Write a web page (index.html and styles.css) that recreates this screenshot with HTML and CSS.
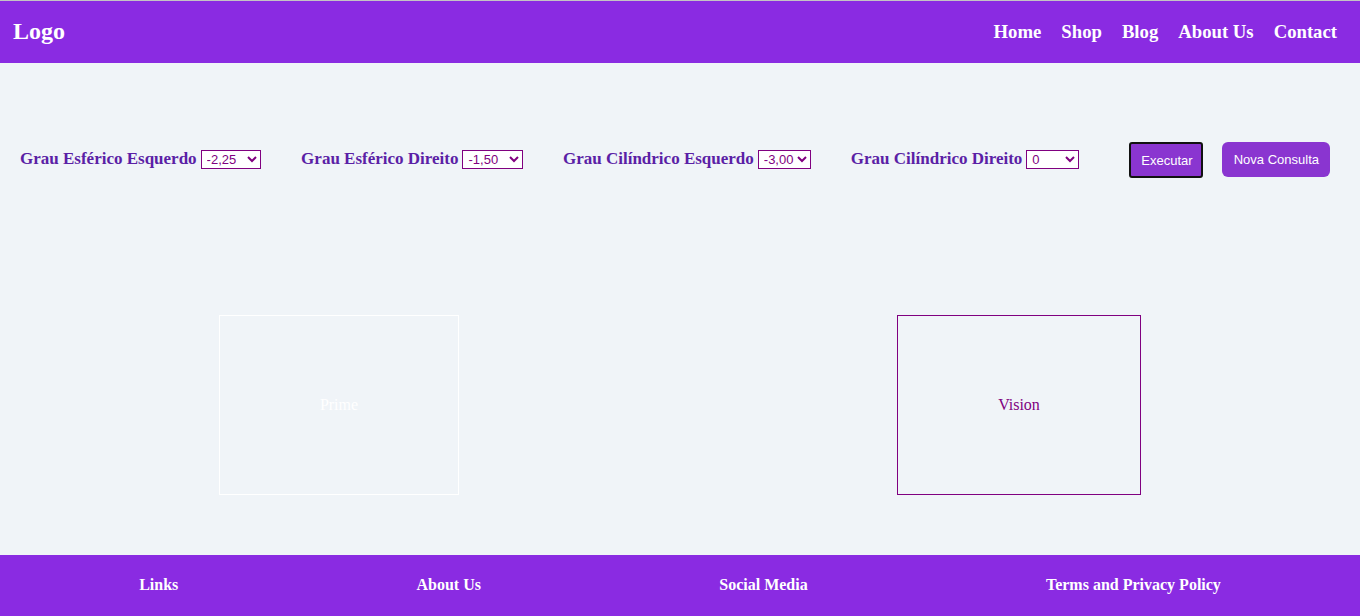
FILE: index.html
```html
<!DOCTYPE html>
<html lang="pt">
<head>
<meta charset="utf-8">
<title>Lentes</title>
<link rel="stylesheet" href="styles.css">
</head>
<body>
<header class="header">
  <div class="logo">Logo</div>
  <nav class="nav">
    <a href="#">Home</a>
    <a href="#">Shop</a>
    <a href="#">Blog</a>
    <a href="#">About Us</a>
    <a href="#">Contact</a>
  </nav>
</header>
<main class="main">
  <div class="controls">
    <label class="field">Grau Esférico Esquerdo
      <select class="sel w60"><option>-2,25</option><option>-10,00</option></select>
    </label>
    <label class="field">Grau Esférico Direito
      <select class="sel w60"><option>-1,50</option><option>-10,00</option></select>
    </label>
    <label class="field">Grau Cilíndrico Esquerdo
      <select class="sel w53"><option>-3,00</option></select>
    </label>
    <label class="field">Grau Cilíndrico Direito
      <select class="sel w53"><option>0</option></select>
    </label>
    <button class="btn btn-exec">Executar</button>
    <button class="btn btn-nova">Nova Consulta</button>
  </div>
  <div class="results">
    <div class="half"><div class="box box-prime">Prime</div></div>
    <div class="half"><div class="box box-vision">Vision</div></div>
  </div>
</main>
<footer class="footer">
  <span>Links</span>
  <span>About Us</span>
  <span>Social Media</span>
  <span>Terms and Privacy Policy</span>
</footer>
</body>
</html>
```

FILE: styles.css
```css
* { box-sizing: border-box; }
html, body { margin: 0; padding: 0; }
body {
  font-family: "Liberation Serif", "Times New Roman", serif;
  background: #f0f4f8;
  border-top: 1px solid #c4c4c4;
  width: 1360px;
  height: 616px;
  overflow: hidden;
}
.header {
  height: 62px;
  background: #8a2be2;
  display: flex;
  align-items: center;
  justify-content: space-between;
  padding: 0 23px 0 13px;
}
.logo {
  color: #fff;
  font-weight: bold;
  font-size: 24px;
  margin-bottom: 2px;
}
.nav {
  display: flex;
  gap: 20px;
}
.nav a {
  color: #fff;
  font-weight: bold;
  font-size: 18.72px;
  text-decoration: none;
}
.main {
  height: 492px;
  padding-top: 79px;
}
.controls {
  display: flex;
  align-items: center;
  height: 36px;
  padding-left: 20px;
}
.field {
  color: #5b1fa6;
  font-weight: bold;
  font-size: 17px;
  margin-right: 40px;
  display: flex;
  align-items: center;
  gap: 4px;
  margin-top: -2px;
}
.field:nth-child(4) { margin-right: 50px; }
.sel {
  height: 19px;
  border: 1px solid #800080;
  border-radius: 0;
  background: #fff;
  color: #800080;
  font-family: "Liberation Sans", Arial, sans-serif;
  font-size: 13px;
  padding: 0 0 0 1px;
}
.w60 { width: 60.5px; }
.w53 { width: 53px; }
.btn {
  background: #8a35d0;
  color: #fff;
  font-family: "Liberation Sans", Arial, sans-serif;
  font-size: 13px;
  height: 36px;
  padding: 0 10px;
}
.btn-exec {
  border: 2px solid #111;
  border-radius: 3px;
  width: 74px;
  margin-right: 19px;
}
.btn-nova {
  border: none;
  border-radius: 6px;
  width: 108px;
  height: 35px;
  align-self: flex-start;
}
.results {
  display: flex;
  margin-top: 137px;
}
.half {
  flex: 1;
  display: flex;
  justify-content: center;
}
.box {
  height: 180px;
  display: flex;
  align-items: center;
  justify-content: center;
  font-size: 16px;
  margin-left: -2px;
}
.box-prime {
  width: 240px;
  border: 1px solid #fff;
  color: #fff;
}
.box-vision {
  width: 244px;
  border: 1px solid #800080;
  color: #800080;
}
.footer {
  height: 61px;
  background: #8a2be2;
  display: flex;
  align-items: center;
  justify-content: space-around;
  padding: 0 20px 2px;
  color: #fff;
  font-weight: bold;
  font-size: 16px;
}
```
